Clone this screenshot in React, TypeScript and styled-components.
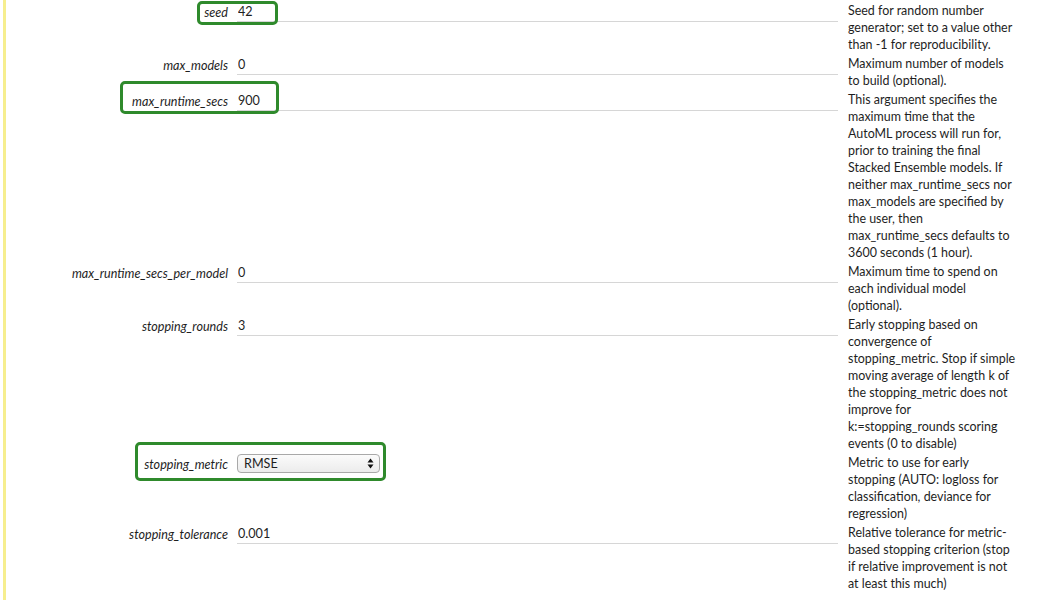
import React from "react";
import styled, { createGlobalStyle } from "styled-components";

const GlobalStyle = createGlobalStyle`
  html, body {
    margin: 0;
    padding: 0;
    background: #fff;
  }
  body {
    font-family: Lato, "Open Sans", "Liberation Sans", sans-serif;
    font-size: 12.6px;
    color: #1e1e1e;
  }
`;

const Page = styled.div`
  margin-left: 3px;
  border-left: 3px solid #f6ee8e;
  min-height: 600px;
  width: 1044px;
  box-sizing: border-box;
  padding-top: 1px;
`;

const Form = styled.div`
  display: flex;
  flex-direction: column;
  margin-left: -6px;
`;

const Row = styled.div`
  position: relative;
  display: grid;
  grid-template-columns: 237px 611px 170px;
  padding: 1px 0;
  line-height: 17px;
`;

const Label = styled.div`
  font-style: italic;
  text-align: right;
  padding-right: 9px;
  padding-top: 2px;
  white-space: nowrap;
`;

const InputCell = styled.div`
  padding-right: 10px;
`;

const TextInput = styled.input`
  display: block;
  width: 100%;
  box-sizing: border-box;
  height: 20px;
  border: none;
  border-bottom: 1px solid #d6d6d6;
  padding: 0 1px;
  margin: 0;
  font: inherit;
  color: #1e1e1e;
  background: transparent;
  outline: none;
`;

const SelectWrap = styled.div`
  position: relative;
  width: 143px;
  height: 19px;
`;

const Select = styled.select`
  appearance: none;
  -webkit-appearance: none;
  width: 100%;
  height: 19px;
  margin: 0;
  box-sizing: border-box;
  border: 1px solid #a9a9a9;
  border-radius: 4px;
  background: linear-gradient(#fbfbfb, #ececec);
  padding: 0 0 0 6px;
  font: inherit;
  color: #1e1e1e;
  outline: none;
`;

const Arrows = styled.svg`
  position: absolute;
  right: 6px;
  top: 4px;
  pointer-events: none;
`;

const Description = styled.div`
  line-height: 17px;
  font-size: 12.45px;
`;

const Highlight = styled.div<{ $left: number; $top: number; $w: number; $h: number }>`
  position: absolute;
  left: ${p => p.$left}px;
  top: ${p => p.$top}px;
  width: ${p => p.$w}px;
  height: ${p => p.$h}px;
  border: 3px solid #2f8a2c;
  border-radius: 5px;
  box-sizing: border-box;
  pointer-events: none;
`;

type Field = {
  name: string;
  value: string;
  description: string;
  kind?: "text" | "select";
  box?: { left: number; top: number; w: number; h: number };
};

const fields: Field[] = [
  {
    name: "seed",
    value: "42",
    description:
      "Seed for random number generator; set to a value other than -1 for reproducibility.",
    box: { left: 197, top: 0, w: 81, h: 24 }
  },
  {
    name: "max_models",
    value: "0",
    description: "Maximum number of models to build (optional)."
  },
  {
    name: "max_runtime_secs",
    value: "900",
    description:
      "This argument specifies the maximum time that the AutoML process will run for, prior to training the final Stacked Ensemble models. If neither max_runtime_secs nor max_models are specified by the user, then max_runtime_secs defaults to 3600 seconds (1 hour).",
    box: { left: 120, top: -9, w: 159, h: 33 }
  },
  {
    name: "max_runtime_secs_per_model",
    value: "0",
    description:
      "Maximum time to spend on each individual model (optional)."
  },
  {
    name: "stopping_rounds",
    value: "3",
    description:
      "Early stopping based on convergence of stopping_metric. Stop if simple moving average of length k of the stopping_metric does not improve for k:=stopping_rounds scoring events (0 to disable)"
  },
  {
    name: "stopping_metric",
    value: "RMSE",
    kind: "select",
    description:
      "Metric to use for early stopping (AUTO: logloss for classification, deviance for regression)",
    box: { left: 135, top: -11, w: 251, h: 39 }
  },
  {
    name: "stopping_tolerance",
    value: "0.001",
    description:
      "Relative tolerance for metric-based stopping criterion (stop if relative improvement is not at least this much)"
  }
];

const metrics = ["AUTO", "deviance", "logloss", "MSE", "RMSE", "MAE", "RMSLE", "AUC", "misclassification"];

export default function App() {
  return (
    <>
      <GlobalStyle />
      <Page>
        <Form>
          {fields.map(f => (
            <Row key={f.name}>
              <Label>{f.name}</Label>
              <InputCell>
                {f.kind === "select" ? (
                  <SelectWrap>
                    <Select defaultValue={f.value}>
                      {metrics.map(m => (
                        <option key={m} value={m}>
                          {m}
                        </option>
                      ))}
                    </Select>
                    <Arrows width="7" height="11" viewBox="0 0 7 11">
                      <path d="M3.5 0.5 L6.5 4.5 H0.5 Z" fill="#111" />
                      <path d="M3.5 10.5 L6.5 6.5 H0.5 Z" fill="#111" />
                    </Arrows>
                  </SelectWrap>
                ) : (
                  <TextInput defaultValue={f.value} />
                )}
              </InputCell>
              <Description>{f.description}</Description>
              {f.box && (
                <Highlight $left={f.box.left} $top={f.box.top} $w={f.box.w} $h={f.box.h} />
              )}
            </Row>
          ))}
        </Form>
      </Page>
    </>
  );
}
